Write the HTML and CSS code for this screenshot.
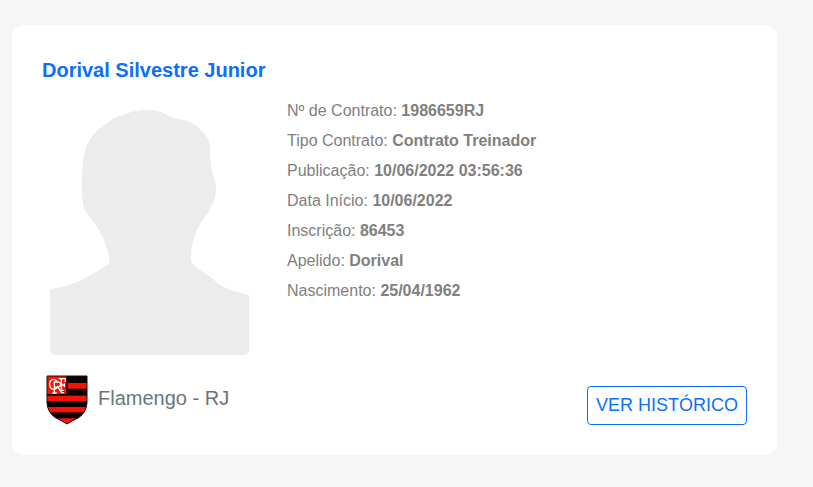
FILE: index.html
```html
<!DOCTYPE html>
<html lang="pt-BR">
<head>
  <meta charset="UTF-8" />
  <meta name="viewport" content="width=device-width, initial-scale=1.0" />
  <title>Dorival Silvestre Junior</title>
  <link rel="stylesheet" href="styles.css">
</head>
<body>
  <main class="card">
    <h1 class="name">Dorival Silvestre Junior</h1>

    <div class="content">
      <svg class="photo" viewBox="0 0 199 250" role="img" aria-label="Sem foto">
        <path fill="#ececec" d="M0 184 Q8 183 15 181 Q27 178 37 172 Q48 166 59 159 Q60 152 57 144 Q55 136 50 127 Q46 119 39 111 Q33 104 33 97 Q31 82 32 67 Q33 50 37 40 Q42 29 53 21 Q62 13 73 10 Q84 5 97 5 Q109 5 117 10 Q124 14 135 15 Q146 19 153 27 Q160 34 160 43 Q160 58 163 70 Q166 77 166 83 Q166 95 161 101 Q159 108 154 113 Q148 121 145 131 Q140 143 141 157 Q146 163 153 167 Q161 172 170 180 Q183 187 199 190 V250 H0 Z"/>
      </svg>

      <ul class="details">
        <li>Nº de Contrato: <strong>1986659RJ</strong></li>
        <li>Tipo Contrato: <strong>Contrato Treinador</strong></li>
        <li>Publicação: <strong>10/06/2022 03:56:36</strong></li>
        <li>Data Início: <strong>10/06/2022</strong></li>
        <li>Inscrição: <strong>86453</strong></li>
        <li>Apelido: <strong>Dorival</strong></li>
        <li>Nascimento: <strong>25/04/1962</strong></li>
      </ul>
    </div>

    <div class="footer">
      <div class="club">
        <svg class="crest" viewBox="0 0 126 150" aria-hidden="true">
          <defs>
            <clipPath id="shield">
              <path d="M3 3 H123 V84 Q121 112 98 128 Q80 136 63 147 Q46 136 28 128 Q5 112 3 84 Z"/>
            </clipPath>
          </defs>
          <g clip-path="url(#shield)">
            <rect width="126" height="150" fill="#0b0000"/>
            <g fill="#fb1206">
              <rect y="24" width="126" height="17"/>
              <rect y="62" width="126" height="16"/>
              <rect y="96" width="126" height="16"/>
              <rect y="130" width="126" height="20"/>
              <rect width="62" height="58"/>
            </g>
            <path d="M0 59 H63 V0" fill="none" stroke="#0b0000" stroke-width="4"/>
          </g>
          <!-- CRF monogram -->
          <g fill="none" stroke="#fff" stroke-width="4">
            <path d="M34 20 Q29 12 21 13 Q11 16 11 28 Q11 41 21 43 Q31 43 35 35"/>
            <path d="M25 54 V21 H38 Q46 24 44 31 Q42 37 26 36 M36 37 L47 53 H54 M19 54 H32"/>
            <path d="M38 11 H58 V21 M46 11 V46 M40 46 H53 M46 30 H56 M55 25 V36"/>
          </g>
          <path d="M3 3 H123 V84 Q121 112 98 128 Q80 136 63 147 Q46 136 28 128 Q5 112 3 84 Z" fill="none" stroke="#1c1010" stroke-width="3"/>
        </svg>
        <span class="club-name">Flamengo - RJ</span>
      </div>
      <button class="history" type="button">VER HISTÓRICO</button>
    </div>
  </main>
</body>
</html>
```

FILE: styles.css
```css
* {
  box-sizing: border-box;
}

body {
  margin: 0;
  padding: 25px 36px 32px 12px;
  font-family: "Liberation Sans", Arial, sans-serif;
  font-size: 16px;
  background: #f6f6f6;
  color: #808080;
}

.card {
  padding: 30px;
  background: #fff;
  border-radius: 12px;
}

.name {
  margin: 0 0 10px;
  font-size: 20px;
  line-height: 30px;
  color: #0d6efd;
}

.content {
  display: flex;
  align-items: flex-start;
  gap: 38px;
  padding-left: 8px;
}

.photo {
  flex: none;
  width: 199px;
  height: 250px;
  margin-top: 10px;
  border-radius: 5px;
}

.details {
  margin: 0;
  padding: 1px 0 0;
  list-style: none;
  line-height: 30px;
}

.footer {
  display: flex;
  justify-content: space-between;
  align-items: flex-end;
  margin-top: 20px;
}

.club {
  display: flex;
  align-items: center;
  gap: 10px;
  padding-left: 4px;
  font-size: 20px;
  line-height: 30px;
  color: #6c757d;
}

.club-name {
  padding-bottom: 4px;
}

.crest {
  width: 42px;
  height: 50px;
}

.history {
  padding: 8px;
  font-family: inherit;
  font-size: 18px;
  line-height: 21px;
  color: #0d6efd;
  background: #fff;
  border: 1px solid #0d6efd;
  border-radius: 4px;
  cursor: pointer;
}

.history:hover {
  color: #fff;
  background: #0d6efd;
}
```
